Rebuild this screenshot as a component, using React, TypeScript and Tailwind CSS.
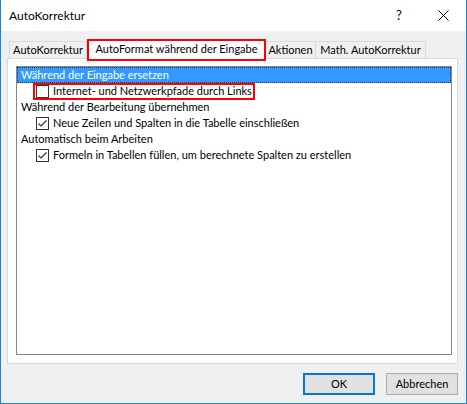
import React from 'react';

const Check = ({ checked }: { checked: boolean }) => (
    <span className="w-[13px] h-[13px] border border-[#333] bg-white flex items-center justify-center shrink-0">
        {checked && (
            <svg width="11" height="11" viewBox="0 0 11 11">
                <path d="M1.5 5.5 L4 8 L9.5 2.5" fill="none" stroke="#333" strokeWidth="1.2" />
            </svg>
        )}
    </span>
);

export default function App() {
    const font = { fontFamily: 'Lato, "Noto Sans", sans-serif' };

    return (
        <div className="w-[467px] h-[404px] flex flex-col border-x border-b border-[#1883d7] bg-[#f0f0f0] text-[11px] text-black whitespace-nowrap" style={font}>
            {/* Title bar */}
            <div className="h-[31px] bg-white flex items-center shrink-0 text-[12px]">
                <span className="pl-[8px] flex-1">AutoKorrektur</span>
                <span className="w-[44px] text-center text-[13px]">?</span>
                <span className="w-[45px] flex items-center justify-center">
                    <svg width="11" height="11" viewBox="0 0 11 11">
                        <path d="M0.5 0.5 L10.5 10.5 M10.5 0.5 L0.5 10.5" stroke="#000" strokeWidth="1" />
                    </svg>
                </span>
            </div>

            <div className="pl-[6px] pt-[8px]">
                {/* Tabs */}
                <div className="flex items-start h-[19px] pl-[2px]">
                    <div className="w-[78px] h-[17px] mt-[2px] border-x border-t border-[#d9d9d9] flex items-center justify-center">AutoKorrektur</div>
                    <div className="w-[179px] h-[22px] relative z-10 bg-white border-2 border-[#ff0000] flex items-center justify-center pb-[2px]">AutoFormat während der Eingabe</div>
                    <div className="w-[50px] h-[17px] mt-[2px] border-r border-t border-[#d9d9d9] flex items-center justify-center">Aktionen</div>
                    <div className="w-[110px] h-[17px] mt-[2px] border-r border-t border-[#d9d9d9] flex items-center justify-center">Math. AutoKorrektur</div>
                </div>

                {/* Tab panel */}
                <div className="w-[451px] h-[306px] bg-white border border-[#d9d9d9] pl-[8px] pt-[7px]">
                    <div className="w-[436px] h-[289px] border border-[#828790] flex flex-col">
                        <div className="h-[16px] bg-[#3399ff] text-white border border-dotted border-[#333] flex items-center pl-[3px]">Während der Eingabe ersetzen</div>
                        <div className="h-[16px] flex items-center">
                            <div className="ml-[16px] h-[17px] w-[222px] border-2 border-[#ff0000] flex items-center gap-[4px] pl-[1px] mt-[1px]">
                                <Check checked={false} />
                                <span>Internet- und Netzwerkpfade durch Links</span>
                            </div>
                        </div>
                        <div className="h-[16px] flex items-center pl-[4px]">Während der Bearbeitung übernehmen</div>
                        <div className="h-[16px] flex items-center gap-[4px] pl-[19px]">
                            <Check checked={true} />
                            <span>Neue Zeilen und Spalten in die Tabelle einschließen</span>
                        </div>
                        <div className="h-[16px] flex items-center pl-[4px]">Automatisch beim Arbeiten</div>
                        <div className="h-[16px] flex items-center gap-[4px] pl-[19px]">
                            <Check checked={true} />
                            <span>Formeln in Tabellen füllen, um berechnete Spalten zu erstellen</span>
                        </div>
                    </div>
                </div>

                {/* Buttons */}
                <div className="flex justify-end gap-[11px] pr-[8px] mt-[9px]">
                    <button className="w-[72px] h-[22px] bg-[#e1e1e1] border-2 border-[#0078d7] flex items-center justify-center">OK</button>
                    <button className="w-[72px] h-[22px] bg-[#e1e1e1] border border-[#adadad] flex items-center justify-center">Abbrechen</button>
                </div>
            </div>
        </div>
    );
}
